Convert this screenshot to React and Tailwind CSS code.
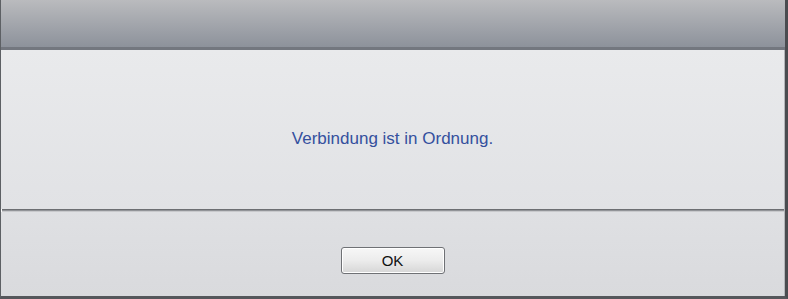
export default function App() {
  return (
    <div
      className="w-[788px] h-[299px] flex flex-col border-l border-[#5d6064] border-r-[3px] border-r-[#4a4c50] border-b-[3px] border-b-[#55575b] overflow-hidden"
      style={{ fontFamily: '"Liberation Sans", Arial, sans-serif' }}
    >
      <div className="h-[47px] shrink-0 bg-gradient-to-b from-[#babbbe] to-[#8d929b]" />
      <div className="h-[3px] shrink-0 bg-[#73777f]" />
      <div className="flex flex-1 min-h-0 border-r border-[#b4b6ba]">
        <div className="flex flex-col flex-1">
          <div className="h-[159px] shrink-0 flex items-center justify-center pt-[18px] bg-gradient-to-b from-[#e9eaec] to-[#e1e2e5]">
            <span className="text-[17px] leading-[20px] text-[#34509e]">Verbindung ist in Ordnung.</span>
          </div>
          <div className="pl-px">
            <div className="h-px bg-[#6c6e72]" />
            <div className="h-px bg-[#929498]" />
            <div className="h-px bg-[#c8c9cc]" />
          </div>
          <div className="flex-1 flex justify-center pt-[35px] bg-gradient-to-b from-[#dfe0e3] to-[#d9dadd]">
            <button className="w-[104px] h-[27px] rounded-[3px] border border-[#6f7175] bg-gradient-to-b from-[#f7f7f7] via-[#ececec] to-[#d6d6d6] text-[15px] text-[#111] leading-none shadow-[inset_0_0_0_1px_#ffffff]">
              OK
            </button>
          </div>
        </div>
      </div>
    </div>
  );
}
